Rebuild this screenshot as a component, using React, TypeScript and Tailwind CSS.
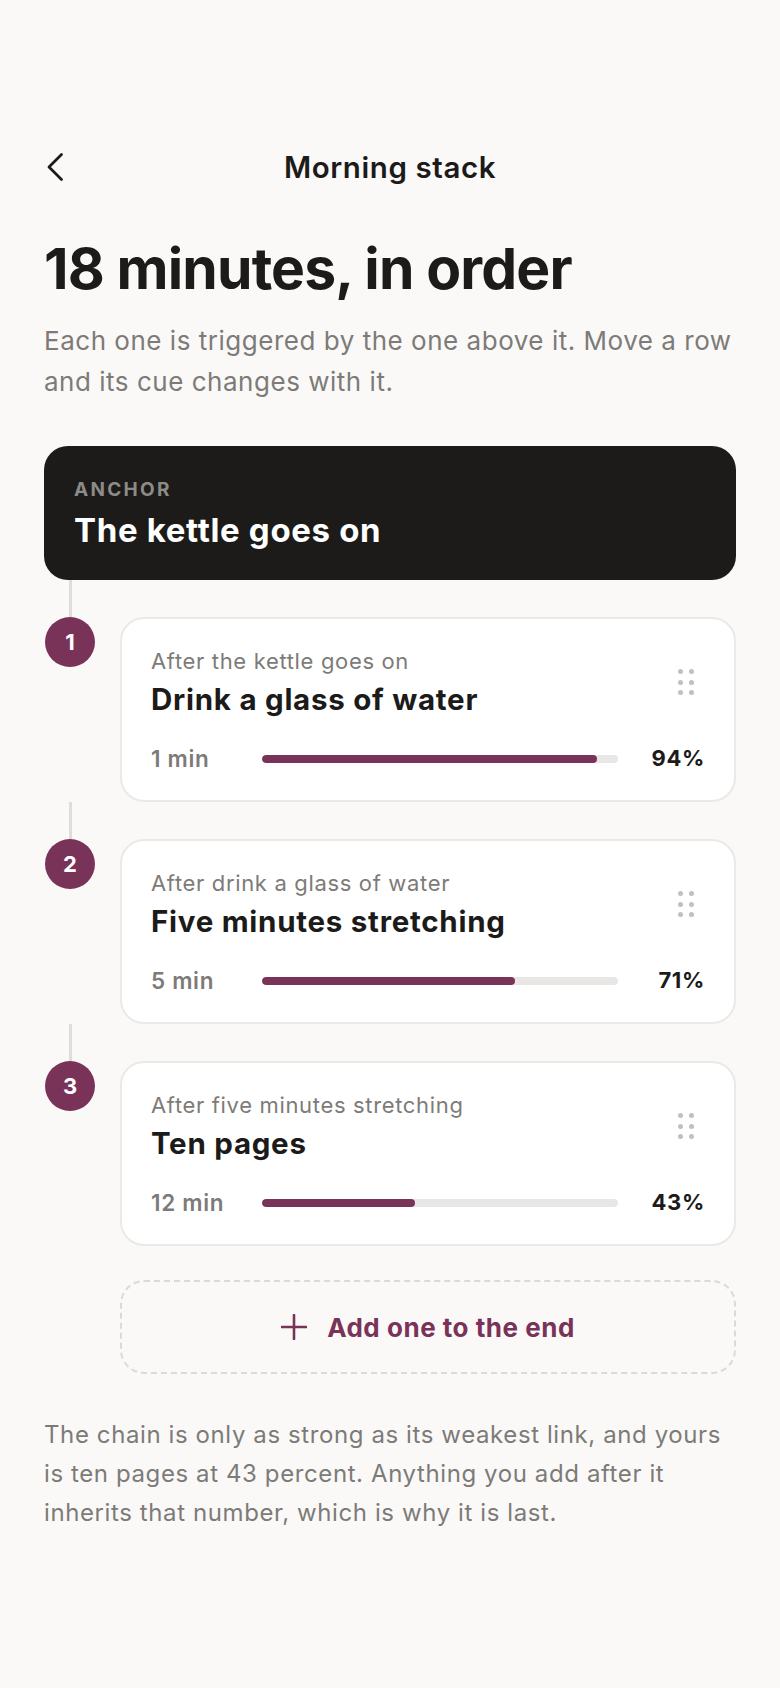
import React from 'react';

interface Step {
  cue: string;
  title: string;
  minutes: number;
  rate: number;
}

const steps: Step[] = [
  { cue: 'After the kettle goes on', title: 'Drink a glass of water', minutes: 1, rate: 94 },
  { cue: 'After drink a glass of water', title: 'Five minutes stretching', minutes: 5, rate: 71 },
  { cue: 'After five minutes stretching', title: 'Ten pages', minutes: 12, rate: 43 },
];

const DragHandle: React.FC = () => (
  <div className="grid grid-cols-2 gap-x-[6.5px] gap-y-[5.5px] mr-[11px]">
    {Array.from({ length: 6 }).map((_, i) => (
      <span key={i} className="block w-[5px] h-[5px] rounded-full bg-[#c2c0bd]" />
    ))}
  </div>
);

const StepRow: React.FC<{ step: Step; index: number }> = ({ step, index }) => (
  <div>
    <div className="ml-[25px] w-[3px] h-[37px] bg-[#dfddda]" />
    <div className="flex items-start">
      <div className="w-[52px] flex justify-center shrink-0">
        <div className="w-[50px] h-[50px] rounded-full bg-[#7a3358] text-white flex items-center justify-center text-[22px] font-bold">
          {index + 1}
        </div>
      </div>
      <div className="ml-[24px] flex-1 bg-white border-2 border-[#ebe9e6] rounded-[24px] px-[29px] pt-[28px] pb-[30px]">
        <div className="flex items-center">
          <div className="flex-1">
            <div className="text-[22px] leading-[29px] tracking-[0.03em] text-[#7d7b78]">{step.cue}</div>
            <div className="mt-[6px] text-[29.5px] leading-[35px] font-bold text-[#1c1b1a] tracking-[0.025em]">
              {step.title}
            </div>
          </div>
          <DragHandle />
        </div>
        <div className="mt-[25px] grid grid-cols-[111px_1fr_87px] items-center h-[28px]">
          <div className="text-[22.5px] font-semibold tracking-[0.03em] text-[#7d7b78]">{step.minutes} min</div>
          <div className="h-[8px] rounded-full bg-[#e8e7e5] overflow-hidden">
            <div className="h-full rounded-full bg-[#7a3358]" style={{ width: `${step.rate}%` }} />
          </div>
          <div className="text-right text-[22px] font-bold tracking-[0.03em] text-[#1c1b1a]">{step.rate}%</div>
        </div>
      </div>
    </div>
  </div>
);

export default function App() {
  return (
    <div className="min-h-[1688px] bg-[#faf9f7] font-[Inter,sans-serif] px-[44px] pt-[139px]">
      <div className="grid grid-cols-[1fr_auto_1fr] items-center h-[56px]">
        <button className="justify-self-start ml-[2px] text-[#1c1b1a]" aria-label="Back">
          <svg width="18" height="30" viewBox="0 0 18 30" fill="none">
            <path d="M15.5 2.5 L3 15 L15.5 27.5" stroke="currentColor" strokeWidth="2.8" strokeLinecap="round" strokeLinejoin="round" />
          </svg>
        </button>
        <div className="text-[29.5px] font-semibold text-[#1c1b1a] tracking-[0.02em]">Morning stack</div>
        <div />
      </div>

      <h1 className="mt-[42px] text-[57px] leading-[63px] font-bold tracking-[-0.015em] text-[#1c1b1a]">
        18 minutes, in order
      </h1>
      <p className="mt-[20px] text-[26px] leading-[41px] tracking-[0.02em] text-[#7d7b78]">
        Each one is triggered by the one above it. Move a row and its cue changes with it.
      </p>

      <div className="mt-[44px] bg-[#1c1b1a] rounded-[24px] px-[30px] pt-[33px] pb-[30px]">
        <div className="text-[19px] leading-[22px] font-bold tracking-[0.12em] text-[#8d8b88]">ANCHOR</div>
        <div className="mt-[9px] text-[33px] leading-[40px] font-bold text-white tracking-[0.02em]">
          The kettle goes on
        </div>
      </div>

      {steps.map((step, i) => (
        <StepRow key={step.title} step={step} index={i} />
      ))}

      <button className="mt-[34px] ml-[76px] w-[calc(100%-76px)] h-[94px] rounded-[24px] border-2 border-dashed border-[#dcdad6] flex items-center justify-center gap-[20px] text-[#7a3358]">
        <svg width="26" height="26" viewBox="0 0 26 26" fill="none">
          <path d="M13 1 V25 M1 13 H25" stroke="currentColor" strokeWidth="2.6" strokeLinecap="round" />
        </svg>
        <span className="text-[26px] font-bold tracking-[0.02em]">Add one to the end</span>
      </button>

      <p className="mt-[41px] text-[24px] leading-[39px] tracking-[0.025em] text-[#7d7b78]">
        The chain is only as strong as its weakest link, and yours is ten pages at 43 percent. Anything you add after it inherits that number, which is why it is last.
      </p>
    </div>
  );
}
